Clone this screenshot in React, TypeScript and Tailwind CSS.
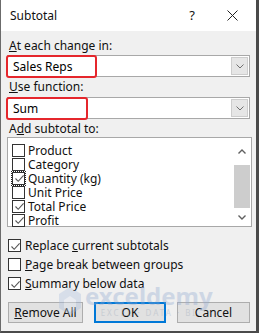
const font = { fontFamily: '"Noto Sans", "Open Sans", sans-serif' }

const Check = () => (
  <svg width="11" height="11" viewBox="0 0 11 11" className="absolute left-[0.5px] top-[0.5px]">
    <path d="M1.5 5.5 L4.2 8.3 L9.6 2.4" fill="none" stroke="#555" strokeWidth="1.1" />
  </svg>
)

const Box = ({ checked, focus }: { checked?: boolean; focus?: boolean }) => (
  <span className="relative shrink-0 w-[13px] h-[13px] border border-[#333] bg-white">
    {checked && <Check />}
    {focus && <span className="absolute -left-[2px] -top-[2px] w-[15px] h-[15px] border border-dotted border-[#222]" />}
  </span>
)

const Chevron = ({ up }: { up?: boolean }) => (
  <svg width="8" height="5" viewBox="0 0 8 5">
    <path d={up ? 'M0.5 4.5 L4 1 L7.5 4.5' : 'M0.5 0.5 L4 4 L7.5 0.5'} fill="none" stroke="#606060" strokeWidth="1.4" />
  </svg>
)

const Combo = ({ value, redWidth }: { value: string; redWidth: string }) => (
  <div className="relative h-[22px] w-[243px] flex border border-[#a8a8a8] bg-white">
    <div className="flex-1 pl-[5px] flex items-center text-[12px] text-black">{value}</div>
    <div className="w-[17px] m-[1px] bg-[#e6e6e6] border border-[#cdcdcd] flex items-center justify-center">
      <svg width="8" height="5" viewBox="0 0 8 5">
        <path d="M0.5 0.5 L4 4 L7.5 0.5" fill="none" stroke="#707070" strokeWidth="1" />
      </svg>
    </div>
    <div className={`absolute -left-[2px] -top-[1px] h-[23px] ${redWidth} rounded-[3px] border-2 border-[#e5262c]`} />
  </div>
)

const listItems = [
  { label: 'Product', checked: false },
  { label: 'Category', checked: false },
  { label: 'Quantity (kg)', checked: true, focus: true },
  { label: 'Unit Price', checked: false },
  { label: 'Total Price', checked: true },
  { label: 'Profit', checked: true },
]

const options = [
  { pre: 'Replace ', u: 'c', post: 'urrent subtotals', checked: true },
  { pre: '', u: 'P', post: 'age break between groups', checked: false },
  { pre: '', u: 'S', post: 'ummary below data', checked: true },
]

export default function App() {
  return (
    <div
      style={font}
      className="relative w-[259px] h-[333px] overflow-hidden bg-[#f0f0f0] border-l border-l-[#6b6b6b] border-r-[3px] border-r-[#4a4a4a] border-b-[2px] border-b-[#4a4a4a] text-[12px] text-[#111] leading-[15px]"
    >
      <div className="h-[31px] bg-white flex items-center pl-[9px] pr-[18px]">
        <span className="flex-1 text-[12px]">Subtotal</span>
        <span className="mr-[32px] text-[13px]">?</span>
        <svg width="11" height="11" viewBox="0 0 11 11">
          <path d="M0.5 0.5 L10.5 10.5 M10.5 0.5 L0.5 10.5" stroke="#222" strokeWidth="1" />
        </svg>
      </div>

      <div className="pl-[6px] pt-[7px]">
        <div className="pl-[2px] h-[15px]"><u>A</u>t each change in:</div>
        <div className="mt-[2px]">
          <Combo value="Sales Reps" redWidth="w-[91px]" />
        </div>

        <div className="pl-[2px] mt-[2px] h-[15px]"><u>U</u>se function:</div>
        <div className="mt-[3px]">
          <Combo value="Sum" redWidth="w-[82px]" />
        </div>

        <div className="pl-[2px] mt-[2px] h-[15px]">A<u>d</u>d subtotal to:</div>
        <div className="mt-[1px] h-[90px] w-[245px] border border-[#a8a8a8] bg-white flex">
          <div className="flex-1 pl-[4px] pt-[5px] flex flex-col">
            {listItems.map(item => (
              <div key={item.label} className="h-[14px] flex items-center gap-[2px]">
                <Box checked={item.checked} focus={item.focus} />
                <span className="ml-[1px]">{item.label}</span>
              </div>
            ))}
          </div>
          <div className="w-[16px] mr-[1px] flex flex-col items-center">
            <div className="h-[27px] flex items-center justify-center"><Chevron up /></div>
            <div className="w-[16px] h-[43px] bg-[#cdcdcd]" />
            <div className="flex-1 flex items-center justify-center"><Chevron /></div>
          </div>
        </div>

        <div className="mt-[12px] flex flex-col gap-[6px]">
          {options.map(o => (
            <div key={o.post} className="h-[13px] flex items-center gap-[4px] pl-[1px]">
              <Box checked={o.checked} />
              <span>{o.pre}<u>{o.u}</u>{o.post}</span>
            </div>
          ))}
        </div>

        <div className="mt-[12px] flex gap-[11px] pl-[1px]">
          <button className="w-[75px] h-[21px] border border-[#adadad] bg-[#e1e1e1] text-[12px]"><u>R</u>emove All</button>
          <button className="w-[72px] h-[21px] border-2 border-[#0078d7] bg-[#e1e1e1] text-[12px]">OK</button>
          <button className="w-[73px] h-[21px] border border-[#adadad] bg-[#e1e1e1] text-[12px]">Cancel</button>
        </div>
      </div>

      <div className="absolute left-[57px] top-[284px] flex items-center gap-[3px] opacity-35 pointer-events-none">
        <svg width="24" height="30" viewBox="0 0 24 30">
          <path d="M12 1 L23 8 L23 22 L12 29 L1 22 L1 8 Z" fill="#a9bede" />
          <path d="M12 10 L18 14 L18 22 L12 26 L6 22 L6 14 Z" fill="#dfe7f3" />
        </svg>
        <div className="flex flex-col items-center">
          <span className="text-[24px] leading-[24px] font-bold text-[#8fa8d0]">exceldemy</span>
          <span className="text-[8px] leading-[10px] tracking-[2px] text-[#9aa6b8]">EXCEL · DATA · BI</span>
        </div>
      </div>
    </div>
  )
}
